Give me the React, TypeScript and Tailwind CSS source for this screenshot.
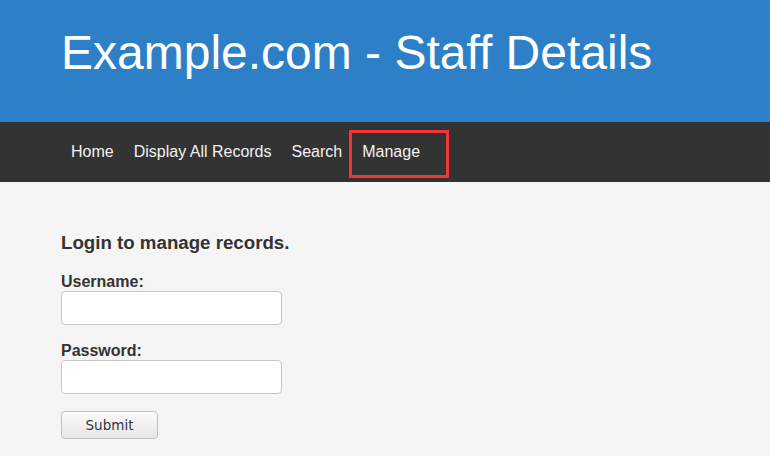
export default function App() {
  return (
    <div className="min-h-screen w-full bg-[#f5f5f5] font-['Liberation_Sans',Arial,sans-serif] text-[#333]">
      <header className="h-[122px] bg-[#2d7fc7] pl-[61px] pt-[25px]">
        <h1 className="text-[48px] leading-[55px] text-white">Example.com - Staff Details</h1>
      </header>
      <nav className="relative flex h-[60px] items-center bg-[#333333] pl-[61px]">
        <a className="px-[10px] text-[16px] text-[#f2f2f2]">Home</a>
        <a className="px-[10px] text-[16px] text-[#f2f2f2]">Display All Records</a>
        <a className="px-[10px] text-[16px] text-[#f2f2f2]">Search</a>
        <a className="px-[10px] text-[16px] text-[#f2f2f2]">Manage</a>
        <div className="absolute left-[349px] top-[8px] h-[48px] w-[100px] border-[3px] border-[#f23535]" />
      </nav>
      <main className="pl-[61px] pt-[50px]">
        <h3 className="text-[18.7px] font-bold leading-[22px]">Login to manage records.</h3>
        <form className="mt-[19px] flex flex-col items-start">
          <label className="text-[16px] font-bold leading-[18px]">Username:</label>
          <input
            type="text"
            className="h-[34px] w-[221px] rounded-[4px] border border-[#cac6c2] bg-white"
          />
          <label className="mt-[16px] text-[16px] font-bold leading-[19px]">Password:</label>
          <input
            type="password"
            className="h-[34px] w-[221px] rounded-[4px] border border-[#cac6c2] bg-white"
          />
          <button
            type="submit"
            className="mt-[17px] h-[28px] w-[97px] rounded-[4px] border border-[#c4c0bc] bg-gradient-to-b from-[#fbfbfb] to-[#e9e7e5] font-['DejaVu_Sans',sans-serif] text-[13.5px] text-[#2f3540]"
          >
            Submit
          </button>
        </form>
      </main>
    </div>
  );
}
